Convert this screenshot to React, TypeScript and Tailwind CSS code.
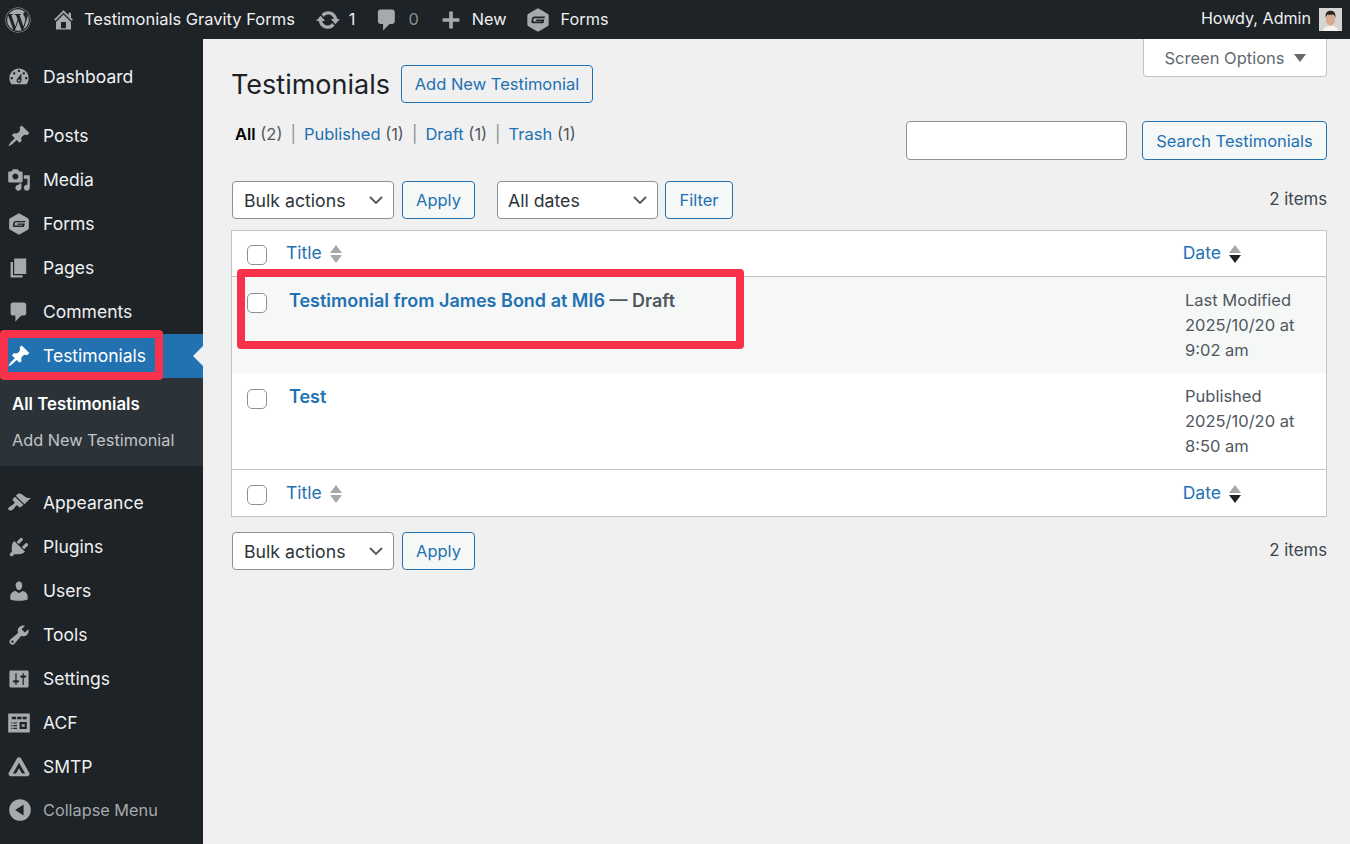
import type { ReactNode } from "react";
import { FaWordpress } from "react-icons/fa";

const FONT = "font-['Inter','Liberation_Sans',sans-serif]";

const ICONS = {
  dashboard:
    "M3.76 16h12.48c1.1-1.37 1.76-3.11 1.76-5 0-4.42-3.58-8-8-8s-8 3.58-8 8c0 1.89.66 3.63 1.76 5zM10 4c.55 0 1 .45 1 1s-.45 1-1 1-1-.45-1-1 .45-1 1-1zM6 6c.55 0 1 .45 1 1s-.45 1-1 1-1-.45-1-1 .45-1 1-1zm8 0c.55 0 1 .45 1 1s-.45 1-1 1-1-.45-1-1 .45-1 1-1zm-5.37 5.55L12 7v6c0 1.1-.9 2-2 2s-2-.9-2-2c0-.57.24-1.08.63-1.45zM4 10c.55 0 1 .45 1 1s-.45 1-1 1-1-.45-1-1 .45-1 1-1zm12 0c.55 0 1 .45 1 1s-.45 1-1 1-1-.45-1-1 .45-1 1-1zm-5 3c0-.55-.45-1-1-1s-1 .45-1 1 .45 1 1 1 1-.45 1-1z",
  pin: "M10.44 3.02l1.82-1.82 6.36 6.35-1.83 1.82c-1.05-.68-2.48-.57-3.41.36l-.75.75c-.92.93-1.04 2.35-.35 3.41l-1.83 1.82-2.41-2.41-2.8 2.79c-.42.42-3.38 2.71-3.8 2.29s1.86-3.39 2.28-3.81l2.79-2.79L4.1 9.36l1.83-1.82c1.05.69 2.48.57 3.4-.36l.75-.75c.93-.92 1.05-2.35.36-3.41z",
  media:
    "M13 11V4c0-.55-.45-1-1-1h-1.67L9 1H5L3.67 3H2c-.55 0-1 .45-1 1v7c0 .55.45 1 1 1h10c.55 0 1-.45 1-1zM7 4.5c1.38 0 2.5 1.12 2.5 2.5S8.38 9.5 7 9.5 4.5 8.38 4.5 7 5.62 4.5 7 4.5zM14 6h5v10.5c0 1.38-1.12 2.5-2.5 2.5S14 17.88 14 16.5s1.12-2.5 2.5-2.5c.17 0 .34.02.5.05V9h-3V6zm-4 8.05V13h2v3.5c0 1.38-1.12 2.5-2.5 2.5S7 17.88 7 16.5 8.12 14 9.5 14c.17 0 .34.02.5.05z",
  forms:
    "M10 1.2c.3 0 .6.1.8.2l6.6 3.800c.5.3.8.8.8 1.300v7c0 .5-.3 1-.8 1.300l-6.600 3.800c-.5.3-1.100.3-1.600 0l-6.600-3.800c-.5-.3-.8-.8-.8-1.300v-7c0-.5.3-1 .8-1.300l6.600-3.800c.2-.1.5-.2.8-.2zM7.200 7.400c-.9 0-1.600.6-1.800 1.400l-.5 2.200c-.2.9.3 1.500 1.200 1.500h7.300c.5 0 .9-.3 1-.8l.4-2.100H8.700l-.3 1.100h4.700l-.1.500H6.500c-.2 0-.3-.1-.2-.4l.4-1.800c.1-.3.3-.4.6-.4h7.800l.3-1.200z",
  pages: "M6 15V2h10v13H6zm-1 1h8v2H3V5h2v11z",
  comments: "M5 2h9c1.1 0 2 .9 2 2v7c0 1.1-.9 2-2 2h-2l-5 5v-5H5c-1.1 0-2-.9-2-2V4c0-1.1.9-2 2-2z",
  appearance:
    "M14.48 11.06L7.41 3.99l1.5-1.5c.5-.56 2.3-.47 3.51.32 1.21.8 1.43 1.28 2.91 2.1 1.18.64 2.45 1.26 4.45.85zm-.71.71L6.7 4.7 4.93 6.47c-.39.39-.39 1.02 0 1.41l1.06 1.06c.39.39.39 1.03 0 1.42-.6.6-1.43 1.11-2.21 1.69-.35.26-.7.53-1.01.84C1.43 13.23.4 14.85 1.43 15.88c.51.51 2.06.73 3.54-.44.33-.26.6-.58.86-.91.58-.78 1.09-1.61 1.69-2.21.39-.39 1.02-.39 1.41 0l1.06 1.06c.39.39 1.02.39 1.41 0z",
  plugins:
    "M13.11 4.36L9.87 7.6 8 5.73l3.24-3.24c.35-.34 1.05-.2 1.56.32.52.51.66 1.21.31 1.55zm-8 1.77l.91-1.12 9.01 9.01-1.19.84c-.71.71-2.63 1.16-3.82 1.16H6.14L4.9 17.26c-.59.59-1.54.59-2.12 0-.59-.58-.59-1.53 0-2.12l1.24-1.24v-3.88c0-1.13.4-3.19 1.09-3.89zm7.26 3.97l3.24-3.24c.34-.35 1.04-.21 1.55.31.52.51.66 1.21.31 1.55l-3.24 3.25z",
  users:
    "M10 9.25c-2.27 0-2.73-3.44-2.73-3.44C7 4.02 7.82 2 9.97 2c2.16 0 2.98 2.02 2.71 3.81 0 0-.41 3.44-2.68 3.44zm0 2.57L12.72 10c2.39 0 4.52 2.33 4.52 4.53v2.49s-3.65 1.13-7.24 1.13c-3.65 0-7.24-1.13-7.24-1.13v-2.49c0-2.25 1.94-4.48 4.47-4.48z",
  tools:
    "M16.68 9.77c-1.34 1.34-3.3 1.67-4.95.99l-5.41 6.52c-.99.99-2.59.99-3.58 0s-.99-2.59 0-3.57l6.52-5.42c-.68-1.65-.35-3.61.99-4.95 1.28-1.28 3.12-1.62 4.72-1.06l-2.89 2.89 2.82 2.82 2.86-2.87c.53 1.58.18 3.39-1.08 4.65zM3.81 16.21c.4.39 1.04.39 1.43 0 .4-.4.4-1.04 0-1.43-.39-.4-1.03-.4-1.43 0-.39.39-.39 1.03 0 1.43z",
  settings:
    "M18 16V4c0-.55-.45-1-1-1H3c-.55 0-1 .45-1 1v12c0 .55.45 1 1 1h14c.55 0 1-.45 1-1zM8 11h1c.55 0 1 .45 1 1s-.45 1-1 1H8v1.5c0 .28-.22.5-.5.5s-.5-.22-.5-.5V13H6c-.55 0-1-.45-1-1s.45-1 1-1h1V5.5c0-.28.22-.5.5-.5s.5.22.5.5V11zm5-2h-1c-.55 0-1-.45-1-1s.45-1 1-1h1V5.5c0-.28.22-.5.5-.5s.5.22.5.5V7h1c.55 0 1 .45 1 1s-.45 1-1 1h-1v5.5c0 .28-.22.5-.5.5s-.5-.22-.5-.5V9z",
  acf: "M1.500 2h17c.3 0 .5.2.5.5v15c0 .3-.2.5-.5.5h-17c-.3 0-.5-.2-.5-.5v-15c0-.3.2-.5.5-.5zM4 4.800v2h3.600v-2zm4.500 0v2h3.600v-2zm4.500 0v2h3.400v-2zM3.500 9.500v1h1v-1zm1.800 0v1h3v-1zM3.500 11.700v1h1v-1zm1.800 0v1h3v-1zM3.500 13.900v1h1v-1zm1.800 0v1h3v-1zM10.500 9.200v5.800h6V9.200zm1.800 1.800h2.400v2.200h-2.400z",
  smtp: "M10 1.800c.7 0 1.300.3 1.600.9l7 12.200c.6 1.100-.2 2.800-1.600 2.800H3c-1.400 0-2.200-1.700-1.600-2.800l7-12.200c.3-.6.9-.9 1.600-.9zm0 4.700L4.900 15.400h2.600L10 11l2.500 4.400h2.600z",
  collapse: "M10 1a9 9 0 1 1 0 18 9 9 0 0 1 0-18zm3 4.500L6 10l7 4.500z",
  update:
    "M10.2 3.28c3.53 0 6.43 2.61 6.92 6h2.08l-3.5 4-3.5-4h2.32c-.45-1.97-2.21-3.45-4.32-3.45-1.45 0-2.73.71-3.54 1.78L4.95 5.66C6.23 4.2 8.11 3.28 10.2 3.28zm-.4 13.44c-3.52 0-6.43-2.61-6.92-6H.8l3.5-4c1.17 1.33 2.33 2.67 3.5 4H5.48c.45 1.97 2.21 3.45 4.32 3.45 1.45 0 2.73-.71 3.54-1.78l1.71 1.95c-1.28 1.46-3.15 2.38-5.25 2.38z",
  home: "M16 8.5l1.53 1.53-1.06 1.06L10 4.62l-6.47 6.47-1.06-1.06L10 2.5l4 4v-2h2v4zm-6-2.46l6 5.99V18H4v-5.97zM12 17v-5H8v5h4z",
  plus: "M17 8.500v3h-5.500V17h-3v-5.500H3v-3h5.500V3h3v5.500z",
};

type IconName = keyof typeof ICONS;

function Dash({ name, className }: { name: IconName; className?: string }) {
  return (
    <svg viewBox="0 0 20 20" fill="currentColor" fillRule="evenodd" className={className}>
      <path d={ICONS[name]} />
    </svg>
  );
}

function MenuItem({ icon, label }: { icon: IconName; label: string }) {
  return (
    <div className="flex h-[44px] items-center pl-[7px] text-[17.5px] text-[#f0f0f1]">
      <Dash name={icon} className="h-[24px] w-[24px] text-[#a7aaad]" />
      <span className="ml-[12px]">{label}</span>
    </div>
  );
}

function Sidebar() {
  return (
    <aside className="w-[203px] shrink-0 bg-[#1d2327] pt-[16px]">
      <MenuItem icon="dashboard" label="Dashboard" />
      <div className="h-[15px]" />
      <MenuItem icon="pin" label="Posts" />
      <MenuItem icon="media" label="Media" />
      <MenuItem icon="forms" label="Forms" />
      <MenuItem icon="pages" label="Pages" />
      <MenuItem icon="comments" label="Comments" />
      <div className="relative flex h-[44px] items-center bg-[#2271b1] pl-[7px] text-[17.5px] text-white">
        <Dash name="pin" className="h-[24px] w-[24px]" />
        <span className="ml-[12px]">Testimonials</span>
        <div className="absolute right-0 top-[12px] h-0 w-0 border-y-[10px] border-r-[10px] border-y-transparent border-r-[#f0f0f1]" />
      </div>
      <div className="flex h-[88px] flex-col gap-[11px] bg-[#2c3338] pl-[12px] pt-[14px]">
        <div className="text-[16.8px] font-semibold text-white">All Testimonials</div>
        <div className="text-[16.3px] text-[#c3c4c7]">Add New Testimonial</div>
      </div>
      <div className="h-[15px]" />
      <MenuItem icon="appearance" label="Appearance" />
      <MenuItem icon="plugins" label="Plugins" />
      <MenuItem icon="users" label="Users" />
      <MenuItem icon="tools" label="Tools" />
      <MenuItem icon="settings" label="Settings" />
      <MenuItem icon="acf" label="ACF" />
      <MenuItem icon="smtp" label="SMTP" />
      <div className="flex h-[42px] items-center pl-[8px] text-[16.3px] text-[#a7aaad]">
        <Dash name="collapse" className="h-[24px] w-[24px]" />
        <span className="ml-[11px]">Collapse Menu</span>
      </div>
    </aside>
  );
}

function AdminBar() {
  return (
    <header className="flex h-[39px] items-center bg-[#1d2327] pl-[5px] pr-[8px] text-[16.3px] text-[#f0f0f1]">
      <FaWordpress className="h-[26px] w-[26px] text-[#a7aaad]" />
      <Dash name="home" className="ml-[20px] h-[25px] w-[25px] text-[#a7aaad]" />
      <span className="ml-[8px] text-[16.5px]">Testimonials Gravity Forms</span>
      <Dash name="update" className="ml-[20px] h-[26px] w-[26px] text-[#a7aaad]" />
      <span className="ml-[8px]">1</span>
      <Dash name="comments" className="ml-[19px] h-[26px] w-[26px] text-[#a7aaad]" />
      <span className="ml-[8px] text-[#8c8f94]">0</span>
      <Dash name="plus" className="ml-[20px] h-[24px] w-[24px] text-[#a7aaad]" />
      <span className="ml-[9px]">New</span>
      <Dash name="forms" className="ml-[18px] h-[26px] w-[26px] text-[#a7aaad]" />
      <span className="ml-[10px]">Forms</span>
      <span className="ml-auto -mt-[2px] text-[16.1px]">Howdy, Admin</span>
      <svg viewBox="0 0 23 23" className="ml-[8px] h-[23px] w-[23px]">
        <rect width="23" height="23" fill="#d5d5d3" />
        <path d="M4 23c.5-4 3-5 7.500-5s7 1 7.500 5z" fill="#f4f1ee" />
        <ellipse cx="11.500" cy="11.500" rx="4.600" ry="6" fill="#d9a88f" />
        <path d="M6.600 10C6 4 9 2.800 11.600 2.800S17 4 16.400 10c-.6-2.500-1.500-3.400-2.400-3.600-2 .5-4 .4-5.200.1-.9.6-1.700 1.500-2.200 3.500z" fill="#2b2320" />
      </svg>
    </header>
  );
}

function OutlineButton({ children, className }: { children: ReactNode; className?: string }) {
  return (
    <button className={`flex h-[38px] items-center justify-center rounded-[4px] border border-[#2271b1] bg-[#f6f7f7] text-[16.5px] text-[#2271b1] ${className ?? ""}`}>
      {children}
    </button>
  );
}

function SelectBox({ label, className }: { label: string; className?: string }) {
  return (
    <div className={`flex h-[38px] items-center justify-between rounded-[4px] border border-[#8c8f94] bg-white pr-[9px] text-[17.7px] text-[#2c3338] ${className ?? "w-[162px] pl-[11px]"}`}>
      <span className="pt-[2px]">{label}</span>
      <svg viewBox="0 0 16 16" className="h-[16px] w-[16px]" fill="none" stroke="#50575e" strokeWidth="1.8">
        <path d="M2 5l6 6 6-6" />
      </svg>
    </div>
  );
}

function Checkbox() {
  return <div className="h-[20px] w-[20px] shrink-0 rounded-[5px] border border-[#8c8f94] bg-white" />;
}

function SortArrows({ active }: { active?: boolean }) {
  return (
    <span className="ml-[8px] flex flex-col gap-[2px]">
      <span className="h-0 w-0 border-x-[6px] border-b-[8px] border-x-transparent border-b-[#a7aaad]" />
      <span className={`h-0 w-0 border-x-[6px] border-t-[8px] border-x-transparent ${active ? "border-t-[#1d2327]" : "border-t-[#a7aaad]"}`} />
    </span>
  );
}

function HeadRow({ top }: { top?: boolean }) {
  return (
    <div className={`flex items-center border-[#c3c4c7] pl-[15px] text-[17.5px] text-[#2271b1] ${top ? "h-[46px] border-b" : "h-[47px] border-t pt-px"}`}>
      <div className="mt-[3px]">
        <Checkbox />
      </div>
      <span className="ml-[19px]">Title</span>
      <SortArrows />
      <span className="ml-[841px]">Date</span>
      <SortArrows active />
    </div>
  );
}

function Row({ title, suffix, status, time, striped }: { title: string; suffix?: string; status: string; time: string; striped?: boolean }) {
  return (
    <div className={`flex h-[96px] pl-[15px] ${striped ? "bg-[#f6f7f7]" : "bg-white"}`}>
      <div className="mt-[16px]">
        <Checkbox />
      </div>
      <div className="ml-[22px] mt-[12px] w-[896px] text-[18px] font-semibold leading-[24px]">
        <span className="text-[#2271b1]">{title}</span>
        {suffix ? <span className="text-[#50575e]"> — {suffix}</span> : null}
      </div>
      <div className="mt-[11px] text-[16.5px] leading-[25px] text-[#50575e]">
        {status}
        <br />
        2025/10/20 at
        <br />
        {time}
      </div>
    </div>
  );
}

function Sep() {
  return <span className="mx-[8px] text-[#8c8f94]">|</span>;
}

function Content() {
  return (
    <main className="min-w-0 flex-1 pl-[29px] pr-[23px]">
      <div className="flex items-start justify-between">
        <div className="mt-[26px] flex items-center">
          <h1 className="-ml-px pt-px text-[27px] leading-[37px] text-[#1d2327]">Testimonials</h1>
          <OutlineButton className="ml-[11px] w-[192px] bg-transparent">Add New Testimonial</OutlineButton>
        </div>
        <div className="flex h-[38px] w-[184px] items-center justify-center gap-[9px] rounded-b-[4px] border border-t-0 border-[#c3c4c7] bg-white pt-px text-[16.5px] text-[#646970]">
          Screen Options
          <span className="h-0 w-0 border-x-[6px] border-t-[8px] border-x-transparent border-t-[#646970]" />
        </div>
      </div>

      <div className="mt-[18px] flex items-start justify-between">
        <div className="ml-[3px] mt-px text-[16.5px] text-[#50575e]">
          <span className="font-semibold text-black">All</span> (2)
          <Sep />
          <span className="text-[#2271b1]">Published</span> (1)
          <Sep />
          <span className="text-[#2271b1]">Draft</span> (1)
          <Sep />
          <span className="text-[#2271b1]">Trash</span> (1)
        </div>
        <div className="flex items-center gap-[15px]">
          <div className="h-[39px] w-[221px] rounded-[4px] border border-[#8c8f94] bg-white" />
          <OutlineButton className="h-[39px] w-[185px] pt-px">Search Testimonials</OutlineButton>
        </div>
      </div>

      <div className="mt-[21px] flex items-center">
        <SelectBox label="Bulk actions" />
        <OutlineButton className="ml-[8px] w-[73px]">Apply</OutlineButton>
        <SelectBox label="All dates" className="ml-[22px] w-[161px] pl-[10px]" />
        <OutlineButton className="ml-[7px] w-[68px]">Filter</OutlineButton>
        <span className="ml-auto -mt-px text-[16.8px] text-[#3c434a]">2 items</span>
      </div>

      <div className="-ml-px mt-[11px] border border-[#c3c4c7] bg-white">
        <HeadRow top />
        <Row striped title="Testimonial from James Bond at MI6" suffix="Draft" status="Last Modified" time="9:02 am" />
        <Row title="Test" status="Published" time="8:50 am" />
        <HeadRow />
      </div>

      <div className="mt-[15px] flex items-center">
        <SelectBox label="Bulk actions" />
        <OutlineButton className="ml-[8px] w-[73px]">Apply</OutlineButton>
        <span className="ml-auto -mt-px text-[16.8px] text-[#3c434a]">2 items</span>
      </div>
    </main>
  );
}

export default function App() {
  return (
    <div className={`relative flex h-[844px] flex-col overflow-hidden bg-[#f0f0f1] ${FONT}`}>
      <AdminBar />
      <div className="flex min-h-0 flex-1">
        <Sidebar />
        <Content />
      </div>
      {/* red markup drawn over the screenshot */}
      <div className="absolute left-0 top-[330px] h-[50px] w-[163px] rounded-[4px] border-[8px] border-[#f8324a]" />
      <div className="absolute left-[237px] top-[269px] h-[80px] w-[507px] rounded-[4px] border-[8px] border-[#f8324a]" />
    </div>
  );
}
